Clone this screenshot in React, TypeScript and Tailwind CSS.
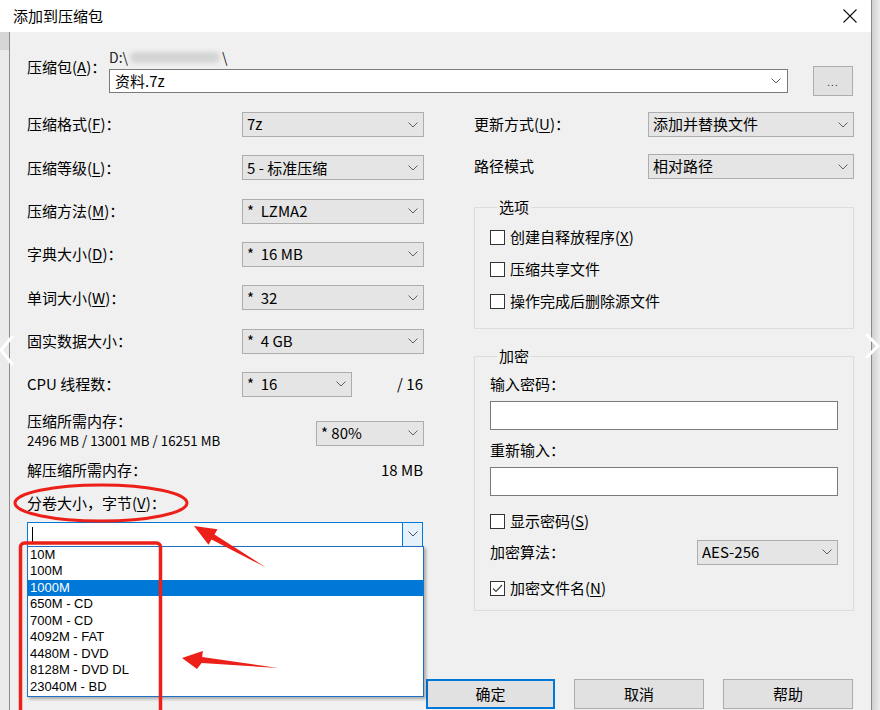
import { clsx } from 'clsx';

const font = "font-['Noto_Sans_CJK_SC','Noto_Sans',sans-serif]";

function Chevron({ color = '#606060' }: { color?: string }) {
  return (
    <svg width="10" height="6" viewBox="0 0 10 6" className="shrink-0">
      <path d="M0.5 0.5 L5 5 L9.5 0.5" fill="none" stroke={color} strokeWidth="1" />
    </svg>
  );
}

function Combo({ value, className }: { value: string; className?: string }) {
  return (
    <div
      className={clsx(
        'h-[25px] flex items-center justify-between pl-[4px] pr-[5px] bg-[#e5e5e5] border border-[#adadad] whitespace-pre',
        className
      )}
    >
      <span>{value}</span>
      <Chevron />
    </div>
  );
}

function Key({ text, k }: { text: string; k?: string }) {
  return (
    <span className="whitespace-nowrap">
      {text}
      {k && (
        <>
          (<span className="underline underline-offset-2">{k}</span>)
        </>
      )}
      ：
    </span>
  );
}

function Check({ checked, children }: { checked?: boolean; children: React.ReactNode }) {
  return (
    <div className="flex items-center gap-[5px] h-full">
      <span className="w-[15px] h-[15px] border border-[#333] bg-white flex items-center justify-center shrink-0">
        {checked && (
          <svg width="13" height="13" viewBox="0 0 13 13">
            <path d="M2 6.5 L5 9.5 L11 3" fill="none" stroke="#444" strokeWidth="1.2" />
          </svg>
        )}
      </span>
      <span>{children}</span>
    </div>
  );
}

const leftRows = [
  { label: '压缩格式', k: 'F', value: '7z' },
  { label: '压缩等级', k: 'L', value: '5 - 标准压缩' },
  { label: '压缩方法', k: 'M', value: '*  LZMA2' },
  { label: '字典大小', k: 'D', value: '*  16 MB' },
  { label: '单词大小', k: 'W', value: '*  32' },
  { label: '固实数据大小', value: '*  4 GB' },
];

const volumes = [
  '10M',
  '100M',
  '1000M',
  '650M - CD',
  '700M - CD',
  '4092M - FAT',
  '4480M - DVD',
  '8128M - DVD DL',
  '23040M - BD',
];

function Annotations() {
  return (
    <svg className="absolute inset-0 z-20 pointer-events-none" width="880" height="710" viewBox="0 0 880 710">
      <ellipse cx="101" cy="503" rx="86" ry="18" fill="none" stroke="#ec2018" strokeWidth="3" />
      <rect x="20.5" y="543" width="140" height="200" rx="4" fill="none" stroke="#ec2018" strokeWidth="3.5" />
      <polygon
        points="194,526 217.5,529.2 214.5,534.4 266,567.5 211.5,539.6 208.5,544.8"
        fill="#ec2018"
      />
      <polygon points="182,658 202.8,651.1 202.2,657.1 278,668 201.6,663.1 197,669" fill="#ec2018" />
      {/* carousel chevrons of the page behind */}
      <path d="M12 337 L1 350 L12 364" fill="none" stroke="#ffffff" strokeWidth="3" strokeLinecap="round" />
      <path d="M867 335 L878 346 L867 357" fill="none" stroke="#ffffff" strokeWidth="3" strokeLinecap="round" />
    </svg>
  );
}

export default function App() {
  return (
    <div className={clsx('relative w-[880px] h-[710px] overflow-hidden flex bg-[#ececec] text-black text-[15px]', font)}>
      <div className="w-[872px] flex flex-col border-r border-[#8a8a8a]">
        {/* title bar */}
        <div className="h-[32px] shrink-0 bg-white flex items-center pl-[13px] pr-[14px]">
          <span className="leading-[20px]">添加到压缩包</span>
          <svg width="14" height="14" viewBox="0 0 14 14" className="ml-auto">
            <path d="M0.5 0.5 L13.5 13.5 M13.5 0.5 L0.5 13.5" stroke="#111" strokeWidth="1.1" />
          </svg>
        </div>

        <div className="flex-1 flex">
          <div className="w-[10px] shrink-0 flex flex-col border-r border-[#8c8c8c] bg-[#ebebeb]">
            <div className="h-[18px] bg-[#d6d6d6]" />
          </div>

          <div className="flex-1 flex flex-col bg-[#f0f0f0] pl-[17px] pr-[17px]">
            {/* archive path */}
            <div className="flex pt-[18px]">
              <div className="w-[82px] mt-[7px] leading-[20px]">
                <Key text="压缩包" k="A" />
              </div>
              <div className="w-[679px] flex flex-col">
                <div className="h-[14px] leading-[14px] text-[14px] flex items-center text-[#222]">
                  <span>D:\</span>
                  <span className="inline-block w-[90px] h-[11px] mx-[2px] rounded-full bg-[#d4d4d4] blur-[2px]" />
                  <span>\</span>
                </div>
                <div className="mt-[5px] h-[24px] bg-white border border-[#7a7a7a] flex items-center justify-between pl-[5px] pr-[6px]">
                  <span>资料.7z</span>
                  <Chevron />
                </div>
              </div>
              <div className="ml-auto mr-[1px] mt-[16px] w-[40px] h-[30px] bg-[#e1e1e1] border border-[#adadad] flex items-center justify-center text-[10px] text-[#333] tracking-[1px]">
                ...
              </div>
            </div>

            {/* options */}
            <div className="flex mt-[16px]">
              <div className="w-[397px] flex flex-col">
                <div className="flex flex-col gap-[18.33px]">
                  {leftRows.map((r) => (
                    <div key={r.label} className="h-[25px] flex items-center">
                      <div className="flex-1">
                        <Key text={r.label} k={r.k} />
                      </div>
                      <Combo value={r.value} className="w-[182px]" />
                    </div>
                  ))}
                  <div className="h-[25px] flex items-center">
                    <div className="w-[215px]">
                      <Key text="CPU 线程数" />
                    </div>
                    <Combo value="*  16" className="w-[110px]" />
                    <div className="flex-1 text-right pr-[1px]">/ 16</div>
                  </div>
                </div>

                <div className="flex mt-[14px]">
                  <div className="flex flex-col">
                    <div className="h-[20px] leading-[20px]">
                      <Key text="压缩所需内存" />
                    </div>
                    <div className="h-[20px] leading-[20px] text-[13.3px]">2496 MB / 13001 MB / 16251 MB</div>
                  </div>
                  <Combo value="* 80%" className="ml-auto mt-[10px] w-[108px] h-[24px]" />
                </div>

                <div className="h-[20px] leading-[20px] mt-[9px] flex">
                  <Key text="解压缩所需内存" />
                  <span className="ml-auto pr-[1px]">18 MB</span>
                </div>

                <div className="h-[20px] leading-[20px] mt-[13px]">
                  <Key text="分卷大小，字节" k="V" />
                </div>

                <div className="relative mt-[9px] h-[25px] w-[396px] bg-white border border-[#0078d7] flex items-center">
                  <span className="ml-[4px] w-px h-[15px] bg-black" />
                  <div className="ml-auto h-full w-[20px] bg-[#e5f1fb] border-l border-[#0078d7] flex items-center justify-center">
                    <Chevron color="#505050" />
                  </div>
                  <div className="absolute z-10 -left-px -right-[2px] top-full h-[151px] bg-white border border-[#1f6fc5] shadow-[2px_2px_3px_rgba(0,0,0,0.3)] flex flex-col text-[13px] font-['Liberation_Sans',sans-serif]">
                    {volumes.map((v) => (
                      <div
                        key={v}
                        className={clsx(
                          'h-[16.5px] leading-[16.5px] pl-[2px] overflow-hidden',
                          v === '1000M' && 'bg-[#0078d7] text-white'
                        )}
                      >
                        {v}
                      </div>
                    ))}
                  </div>
                </div>
              </div>

              <div className="ml-auto w-[380px] flex flex-col">
                <div className="h-[25px] flex items-center">
                  <div className="flex-1">
                    <Key text="更新方式" k="U" />
                  </div>
                  <Combo value="添加并替换文件" className="w-[206px]" />
                </div>
                <div className="h-[25px] mt-[17px] flex items-center">
                  <div className="flex-1">路径模式</div>
                  <Combo value="相对路径" className="w-[206px]" />
                </div>

                <fieldset className="mt-[18px] border border-[#dcdcdc] px-[15px] pb-[11px]">
                  <legend className="ml-[7px] px-[2px] leading-[20px]">选项</legend>
                  <div className="mt-[4px] flex flex-col">
                    <div className="h-[32px]">
                      <Check>
                        创建自释放程序(<span className="underline underline-offset-2">X</span>)
                      </Check>
                    </div>
                    <div className="h-[32px]">
                      <Check>压缩共享文件</Check>
                    </div>
                    <div className="h-[32px]">
                      <Check>操作完成后删除源文件</Check>
                    </div>
                  </div>
                </fieldset>

                <fieldset className="mt-[17px] border border-[#dcdcdc] px-[15px] pb-[10px]">
                  <legend className="ml-[7px] px-[2px] leading-[20px]">加密</legend>
                  <div className="mt-[8px] h-[20px] leading-[20px]">
                    <Key text="输入密码" />
                  </div>
                  <div className="mt-[7px] h-[29px] bg-white border border-[#7a7a7a]" />
                  <div className="mt-[10px] h-[20px] leading-[20px]">
                    <Key text="重新输入" />
                  </div>
                  <div className="mt-[7px] h-[29px] bg-white border border-[#7a7a7a]" />
                  <div className="mt-[13px] h-[24px]">
                    <Check>
                      显示密码(<span className="underline underline-offset-2">S</span>)
                    </Check>
                  </div>
                  <div className="mt-[7px] h-[24px] flex items-center">
                    <div className="flex-1">
                      <Key text="加密算法" />
                    </div>
                    <Combo value="AES-256" className="w-[141px] h-[24px]" />
                  </div>
                  <div className="mt-[12px] h-[24px]">
                    <Check checked>
                      加密文件名(<span className="underline underline-offset-2">N</span>)
                    </Check>
                  </div>
                </fieldset>
              </div>
            </div>

            {/* dialog buttons */}
            <div className="flex justify-end gap-[19px] mt-[68px] mr-px">
              <div className="w-[129px] h-[30px] shrink-0 bg-[#e1e1e1] border-2 border-[#0078d7] flex items-center justify-center">
                确定
              </div>
              <div className="w-[130px] h-[30px] shrink-0 bg-[#e1e1e1] border border-[#adadad] flex items-center justify-center">
                取消
              </div>
              <div className="w-[130px] h-[30px] shrink-0 bg-[#e1e1e1] border border-[#adadad] flex items-center justify-center">
                帮助
              </div>
            </div>
          </div>
        </div>
      </div>
      <div className="flex-1 bg-gradient-to-r from-[#d0d0d0] to-[#ececec]" />
      <Annotations />
    </div>
  );
}
